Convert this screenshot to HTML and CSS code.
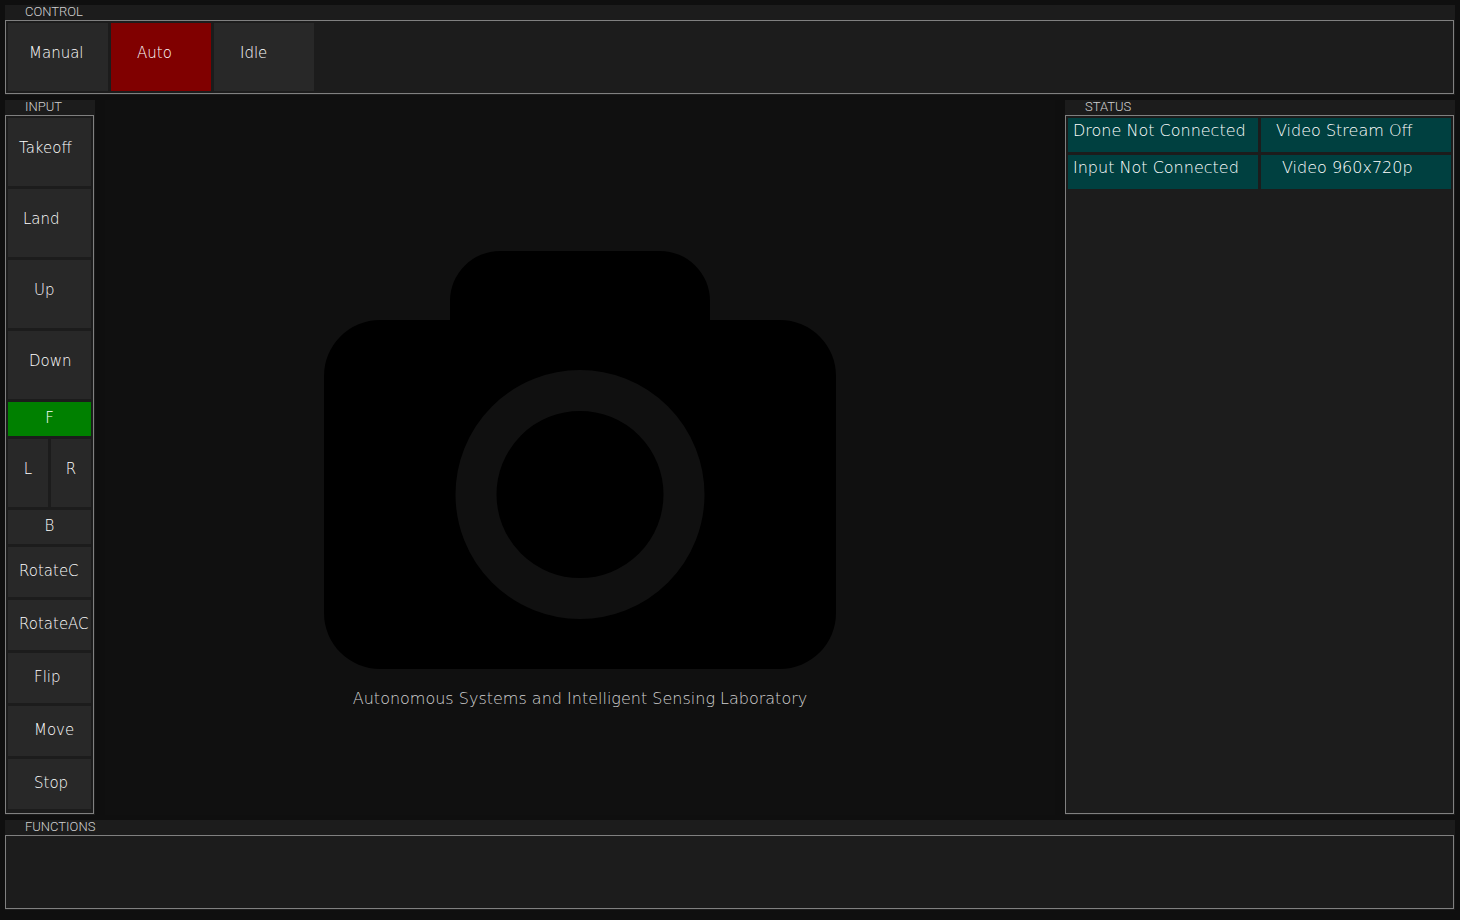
FILE: index.html
```html
<!DOCTYPE html>
<html lang="en">
<head>
<meta charset="utf-8">
<title>Drone Control</title>
<link rel="stylesheet" href="styles.css">
</head>
<body>
<div class="app">
  <section class="panel control">
    <h2 class="panel-title">CONTROL</h2>
    <div class="frame modes">
      <button class="btn indent-lg" type="button">Manual</button>
      <button class="btn indent-xl btn-auto" type="button">Auto</button>
      <button class="btn indent-xl" type="button">Idle</button>
    </div>
  </section>

  <section class="panel input">
    <h2 class="panel-title">INPUT</h2>
    <div class="frame keys">
      <button class="btn indent-sm" type="button">Takeoff</button>
      <button class="btn indent-md" type="button">Land</button>
      <button class="btn indent-xl" type="button">Up</button>
      <button class="btn indent-lg" type="button">Down</button>
      <button class="btn btn-short btn-on centered" type="button">F</button>
      <div class="pair">
        <button class="btn centered" type="button">L</button>
        <button class="btn centered" type="button">R</button>
      </div>
      <button class="btn btn-short centered" type="button">B</button>
      <button class="btn btn-short indent-sm" type="button">RotateC</button>
      <button class="btn btn-short indent-sm" type="button">RotateAC</button>
      <button class="btn btn-short indent-xl" type="button">Flip</button>
      <button class="btn btn-short indent-xl" type="button">Move</button>
      <button class="btn btn-short indent-xl" type="button">Stop</button>
    </div>
  </section>

  <main class="video">
    <figure class="placeholder">
      <svg class="camera" viewBox="0 0 512 418" aria-hidden="true">
        <path d="M126 69V50A50 50 0 0 1 176 0H336A50 50 0 0 1 386 50V69H456A56 56 0 0 1 512 125V362A56 56 0 0 1 456 418H56A56 56 0 0 1 0 362V125A56 56 0 0 1 56 69Z" fill="#000"/>
        <circle cx="256" cy="243.500" r="104" fill="none" stroke="#101010" stroke-width="41"/>
      </svg>
      <figcaption class="caption">Autonomous Systems and Intelligent Sensing Laboratory</figcaption>
    </figure>
  </main>

  <section class="panel status">
    <h2 class="panel-title">STATUS</h2>
    <div class="frame states">
      <div class="state">Drone Not Connected</div>
      <div class="state indent-md">Video Stream Off</div>
      <div class="state">Input Not Connected</div>
      <div class="state indent-lg">Video 960x720p</div>
    </div>
  </section>

  <section class="panel functions">
    <h2 class="panel-title">FUNCTIONS</h2>
    <div class="frame"></div>
  </section>
</div>
</body>
</html>
```
FILE: styles.css
```css
* { box-sizing: border-box; }

body {
  margin: 0;
  background: #0f0f0f;
  color: #fff;
  font: 300 15px/20px "DejaVu Sans Light", "DejaVu Sans", sans-serif;
}

.app {
  display: grid;
  grid-template-columns: 90px 1fr 390px;
  grid-template-rows: 90px 1fr 90px;
  grid-template-areas:
    "control control control"
    "input video status"
    "functions functions functions";
  gap: 5px;
  min-height: 100vh;
  padding: 5px 5px 10px;
}

.control { grid-area: control; }
.input { grid-area: input; }
.status { grid-area: status; }
.functions { grid-area: functions; }

.panel {
  display: flex;
  flex-direction: column;
  padding: 0 1px 1px 0;
  background: #1c1c1c;
}

.panel-title {
  margin: 0;
  padding: 0 0 2px 20px;
  color: #d0d0d0;
  font: 300 13px/13px Roboto, sans-serif;
}

.frame {
  flex: 1;
  padding: 2px;
  border: 1px solid #808080;
}

.btn {
  padding: 0 0 8px;
  border: 0;
  background: #282828;
  color: #fff;
  font: inherit;
  text-align: left;
  white-space: nowrap;
}

.state {
  padding: 3px 5px 0;
  background: #004040;
  font-size: 16px;
  white-space: nowrap;
}

.btn-short { padding-bottom: 2px; }
.btn-auto { background: #800000; }
.btn-on { background: #008000; }

.indent-sm { padding-left: 11px; }
.indent-md { padding-left: 15px; }
.indent-lg { padding-left: 21px; }
.indent-xl { padding-left: 26px; }
.centered { text-align: center; }

.modes {
  display: flex;
  gap: 3px;
}
.modes .btn { width: 100px; }

.keys {
  display: grid;
  grid-template-rows: repeat(4, 68fr) 34fr 68fr 34fr repeat(5, 50fr);
  gap: 3px;
  padding-bottom: 4px;
}

.pair {
  display: grid;
  grid-template-columns: 1fr 1fr;
  gap: 3px;
}

.video {
  grid-area: video;
  margin: 0 5px;
  background: #101010;
}

.placeholder {
  display: flex;
  flex-direction: column;
  align-items: center;
  justify-content: center;
  height: 100%;
  margin: 0;
  padding-top: 45px;
}

.camera {
  width: 512px;
  max-width: 100%;
}

.caption {
  margin-top: 20px;
  color: #d0d0d0;
  font-size: 16px;
}

.states {
  display: grid;
  grid-template-columns: 1fr 1fr;
  grid-auto-rows: 34px;
  align-content: start;
  gap: 3px;
}
```
